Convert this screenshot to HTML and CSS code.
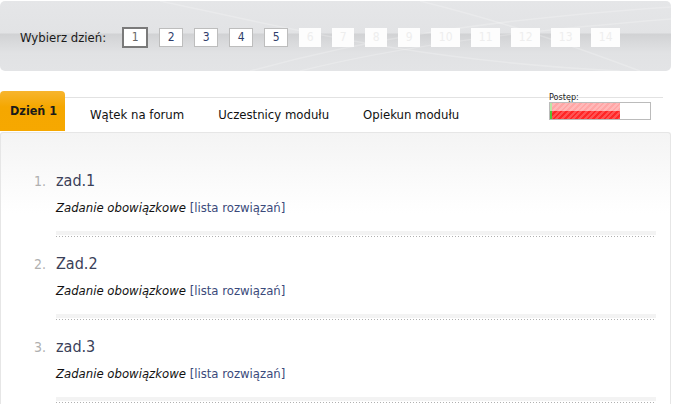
FILE: index.html
```html
<!DOCTYPE html>
<html>
<head>
  <title>Moduł - Dzień 1</title>
  <link rel="stylesheet" href="styles.css">
</head>
<body>
  <!-- Day picker -->
  <div class="days">
    <svg class="swoosh" width="671" height="70" viewBox="0 0 671 70">
      <path d="M250 70 C 360 40, 470 20, 671 6" />
      <path d="M300 70 C 400 45, 520 30, 671 18" />
      <path d="M160 0 C 300 30, 420 60, 620 70" />
      <path d="M420 0 C 500 20, 560 40, 640 70" />
    </svg>
    <span class="days-label">Wybierz dzień:</span>
    <div class="day-list">
      <a class="day current">1</a>
      <a class="day">2</a>
      <a class="day">3</a>
      <a class="day">4</a>
      <a class="day">5</a>
      <span class="day off">6</span>
      <span class="day off">7</span>
      <span class="day off">8</span>
      <span class="day off">9</span>
      <span class="day off wide">10</span>
      <span class="day off wide">11</span>
      <span class="day off wide">12</span>
      <span class="day off wide">13</span>
      <span class="day off wide">14</span>
    </div>
  </div>

  <!-- Tabs -->
  <div class="tabs">
    <div class="tab active">Dzień 1</div>
    <div class="tab-bar">
      <div class="tab">Wątek na forum</div>
      <div class="tab">Uczestnicy modułu</div>
      <div class="tab">Opiekun modułu</div>
      <div class="progress">
        <div class="progress-label">Postęp:</div>
        <div class="progress-bar">
          <div class="progress-ok" style="width: 2px"></div>
          <div class="progress-bad" style="width: 68px"></div>
        </div>
      </div>
    </div>
  </div>

  <!-- Task list -->
  <div class="content">
    <div class="task">
      <span class="task-num">1.</span>
      <div class="task-title">zad.1</div>
      <div class="task-desc"><i>Zadanie obowiązkowe</i> <a>[lista rozwiązań]</a></div>
      <div class="task-sep"></div>
    </div>
    <div class="task">
      <span class="task-num">2.</span>
      <div class="task-title">Zad.2</div>
      <div class="task-desc"><i>Zadanie obowiązkowe</i> <a>[lista rozwiązań]</a></div>
      <div class="task-sep"></div>
    </div>
    <div class="task">
      <span class="task-num">3.</span>
      <div class="task-title">zad.3</div>
      <div class="task-desc"><i>Zadanie obowiązkowe</i> <a>[lista rozwiązań]</a></div>
      <div class="task-sep"></div>
    </div>
  </div>
</body>
</html>
```

FILE: styles.css
```css
/* Basic reset */
* {
  box-sizing: border-box;
  margin: 0;
  padding: 0;
}

body {
  font-family: "DejaVu Sans Condensed", "DejaVu Sans", sans-serif;
  font-stretch: semi-condensed;
  background-color: #ffffff;
  color: #111111;
  width: 677px;
  overflow: hidden;
}

/* Day picker panel */
.days {
  position: relative;
  margin-top: 1px;
  width: 671px;
  height: 70px;
  border-radius: 5px;
  display: flex;
  align-items: center;
  padding: 2px 0 0 20px;
  background: linear-gradient(#e5e6e8 0, #e2e3e5 32px, #d1d2d4 33px, #d9dadc 42px, #e1e2e4 52px, #e3e4e6 100%);
  overflow: hidden;
}

.swoosh {
  position: absolute;
  left: 0;
  top: 0;
}

.swoosh path {
  fill: none;
  stroke: #ffffff;
  stroke-opacity: 0.22;
  stroke-width: 1.5;
}

.days-label {
  position: relative;
  font-size: 13px;
  color: #1a1a1a;
  margin-right: 16px;
}

.day-list {
  position: relative;
  display: flex;
  align-items: center;
  gap: 11px;
}

.day {
  width: 24px;
  height: 19px;
  border: 1px solid #bdbdbd;
  background-color: #ffffff;
  font-size: 12px;
  line-height: 17px;
  text-align: center;
  color: #2f3d6b;
}

.day.current {
  width: 26px;
  height: 21px;
  border: 2px solid #7a7a7a;
  color: #666666;
}

.day.off {
  width: 22px;
  border: none;
  line-height: 19px;
  color: #eeeeee;
  background-color: #fdfdfd;
}

.day.wide {
  width: 29px;
}

/* Tabs */
.tabs {
  display: flex;
  margin-top: 20px;
  width: 663px;
  height: 41px;
}

.tab {
  font-size: 13px;
  line-height: 34px;
  padding: 0 17px;
  color: #111111;
}

.tab.active {
  width: 65px;
  height: 40px;
  line-height: 40px;
  padding: 0 0 0 10px;
  border-radius: 4px 4px 0 0;
  background: linear-gradient(#f7b52e, #f5a700 40%, #f6a800);
  font-weight: bold;
  font-size: 12.5px;
  color: #1a1a1a;
}

.tab-bar {
  flex: 1;
  display: flex;
  margin-top: 6px;
  padding-left: 8px;
  border-top: 1px solid #e2e2e2;
}

.progress {
  margin: -5px 12px 0 auto;
  width: 102px;
}

.progress-label {
  font-family: "DejaVu Sans", sans-serif;
  font-size: 9px;
  line-height: 9px;
  color: #222222;
}

.progress-bar {
  display: flex;
  height: 18px;
  border: 1px solid #bbbbbb;
  background-color: #ffffff;
}

.progress-ok {
  background: linear-gradient(#b9e6a6 50%, #55c23a 50%);
}

.progress-bad {
  background:
    repeating-linear-gradient(-45deg, rgba(255, 255, 255, 0.2) 0 2px, transparent 2px 4px),
    linear-gradient(#ffa6a6 50%, #ff2626 50%);
}

/* Task list */
.content {
  width: 671px;
  height: 280px;
  padding: 21px 14px 0 33px;
  border: 1px solid #e6e6e6;
  border-bottom: none;
  border-radius: 3px 3px 0 0;
  background: linear-gradient(#f4f4f4, #ffffff 80px);
}

.task {
  display: grid;
  grid-template-columns: 22px 1fr;
  padding-top: 17px;
}

.task-num {
  font-size: 14px;
  line-height: 20px;
  color: #b0b0b0;
}

.task-title {
  font-size: 16px;
  line-height: 20px;
  color: #3a4058;
}

.task-desc {
  grid-column: 2;
  margin-top: 9px;
  font-size: 13px;
  line-height: 16px;
  color: #111111;
}

.task-desc a {
  color: #3b4a7b;
}

.task-sep {
  grid-column: 2;
  margin-top: 15px;
  height: 6px;
  background:
    linear-gradient(#f3f3f3, #f3f3f3) top / 100% 4px no-repeat,
    repeating-linear-gradient(to right, #b0b0b0 0 1px, transparent 1px 3px) bottom / 100% 1px no-repeat;
}
```
